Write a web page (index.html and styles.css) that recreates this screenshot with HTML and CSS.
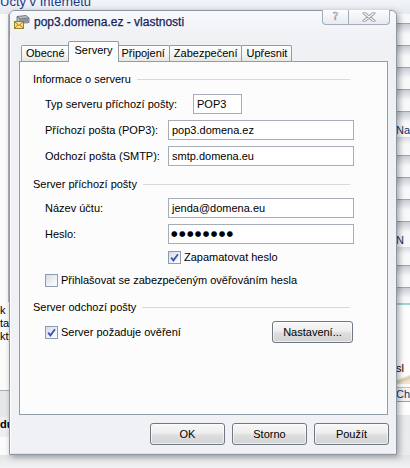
FILE: index.html
```html
<!DOCTYPE html>
<html lang="cs">
<head>
<meta charset="utf-8">
<title>pop3.domena.ez - vlastnosti</title>
<link rel="stylesheet" href="styles.css">
</head>
<body>
<div class="desk">
  <div class="bg-top"><span class="bg-title">Účty v Internetu</span></div>
  <div class="bg-left">
    <div class="bl-upper"></div>
    <div class="bl-text"><div>k</div><div>ta</div><div>kty</div></div>
    <div class="bl-band"></div>
    <div class="bl-du">du</div>
  </div>
  <div class="bg-right">
    <div class="br-list">
      <div class="br-nas">Nas</div>
      <div class="br-n">N</div>
    </div>
    <div class="br-pane">
      <div class="br-sl">sl</div>
      <div class="br-pic"></div>
      <div class="br-ch">Ch</div>
    </div>
  </div>
  <div class="bg-bottom"></div>

  <div class="dialog">
    <div class="titlebar">
      <svg class="appicon" viewBox="0 0 16 16" width="16" height="16">
        <path d="M3 2.5 L12 1.5 L15 4 L15 8.5 L6 9.5 L3 7 Z" fill="#b9bec6" stroke="#5d636b" stroke-width="0.8"/>
        <path d="M3 2.5 L6 5 L15 4" fill="none" stroke="#5d636b" stroke-width="0.8"/>
        <path d="M6 5 L6 9.5" fill="none" stroke="#5d636b" stroke-width="0.8"/>
        <path d="M6.5 5.5 L14.5 4.5 L14.5 8 L6.5 9 Z" fill="#8c939c"/>
        <rect x="0.5" y="7.5" width="9" height="7" fill="#f5e27a" stroke="#8b7a1c" stroke-width="0.9"/>
        <path d="M0.8 7.8 L5 11.5 L9.2 7.8 M0.8 14.2 L3.8 10.8 M9.2 14.2 L6.2 10.8" fill="none" stroke="#b5542a" stroke-width="0.8"/>
      </svg>
      <span class="title">pop3.domena.ez - vlastnosti</span>
      <div class="capbtns">
        <div class="capbtn help"><span class="q">?</span></div>
        <div class="capbtn close">
          <svg viewBox="0 0 14 10" width="14" height="10">
            <path d="M2 1 L12 9 M12 1 L2 9" stroke="#959ca6" stroke-width="3" stroke-linecap="round"/>
            <path d="M2 1 L12 9 M12 1 L2 9" stroke="#f4f5f7" stroke-width="1.3" stroke-linecap="round"/>
          </svg>
        </div>
      </div>
    </div>

    <div class="tabs">
      <div class="tab">Obecné</div>
      <div class="tab active">Servery</div>
      <div class="tab">Připojení</div>
      <div class="tab">Zabezpečení</div>
      <div class="tab">Upřesnit</div>
    </div>

    <div class="panel">
      <div class="group-h"><span>Informace o serveru</span></div>
      <div class="row first">
        <span class="lbl wide">Typ serveru příchozí pošty:</span>
        <div class="field short">POP3</div>
      </div>
      <div class="row">
        <span class="lbl">Příchozí pošta (POP3):</span>
        <div class="field">pop3.domena.ez</div>
      </div>
      <div class="row">
        <span class="lbl">Odchozí pošta (SMTP):</span>
        <div class="field">smtp.domena.eu</div>
      </div>

      <div class="group-h g2"><span>Server příchozí pošty</span></div>
      <div class="row first2">
        <span class="lbl">Název účtu:</span>
        <div class="field">jenda@domena.eu</div>
      </div>
      <div class="row">
        <span class="lbl">Heslo:</span>
        <div class="field pw">●●●●●●●●</div>
      </div>
      <div class="check-row indent">
        <span class="cb">
          <svg viewBox="0 0 11 11" width="11" height="11"><path d="M2.2 5.6 L4.4 8.4 L9 2.2" fill="none" stroke="#3a55b8" stroke-width="1.8"/></svg>
        </span>
        <span>Zapamatovat heslo</span>
      </div>
      <div class="check-row second">
        <span class="cb"></span>
        <span>Přihlašovat se zabezpečeným ověřováním hesla</span>
      </div>

      <div class="group-h g3"><span>Server odchozí pošty</span></div>
      <div class="check-row last">
        <span class="cb">
          <svg viewBox="0 0 11 11" width="11" height="11"><path d="M2.2 5.6 L4.4 8.4 L9 2.2" fill="none" stroke="#3a55b8" stroke-width="1.8"/></svg>
        </span>
        <span>Server požaduje ověření</span>
        <button class="btn setup">Nastavení...</button>
      </div>
    </div>

    <div class="buttons">
      <button class="btn">OK</button>
      <button class="btn">Storno</button>
      <button class="btn">Použít</button>
    </div>
  </div>
</div>
</body>
</html>
```

FILE: styles.css
```css
html, body {
  margin: 0;
  padding: 0;
}

body {
  width: 410px;
  height: 468px;
  overflow: hidden;
  font-family: "Liberation Sans", Arial, sans-serif;
  font-size: 11px;
  color: #000;
  background: #eceef1;
}

.desk {
  position: relative;
  width: 410px;
  height: 468px;
  overflow: hidden;
}

/* ---------- background windows (desktop canvas) ---------- */
.bg-top {
  position: absolute;
  left: 0;
  top: 0;
  width: 410px;
  height: 14px;
  background: linear-gradient(#f1f4f8, #e6eaf0);
  overflow: hidden;
}

.bg-title {
  display: block;
  margin-top: -6px;
  font-size: 13px;
  line-height: 15px;
  color: #1b3987;
}

.bg-left {
  position: absolute;
  left: 0;
  top: 14px;
  width: 9px;
  height: 441px;
  display: flex;
  flex-direction: column;
  background: #fbfbfc;
  overflow: hidden;
}

.bl-upper {
  height: 288px;
  border-right: 1px solid #b5b9be;
  box-sizing: border-box;
}

.bl-text {
  height: 86px;
  padding-top: 2px;
  line-height: 13px;
  font-size: 11px;
  white-space: nowrap;
}

.bl-band {
  height: 26px;
  border-top: 1px solid #a9adb2;
  background: #e6e7e9;
}

.bl-du {
  height: 20px;
  font-weight: bold;
  line-height: 14px;
  background: #eeeff1;
}

.bg-right {
  position: absolute;
  left: 396px;
  top: 14px;
  width: 14px;
  height: 441px;
  display: flex;
  flex-direction: column;
  background: linear-gradient(#d6d8dc, #ebecee);
  overflow: hidden;
}

.br-list {
  height: 289px;
  background: repeating-linear-gradient(to bottom,
    #f7f8f9 0, #f7f8f9 9px,
    #9ea4ab 9px, #9ea4ab 10px,
    #c9cdd3 10px, #e9ebee 17px,
    #f7f8f9 20px, #f7f8f9 22px);
  font-size: 11px;
  white-space: nowrap;
  color: #1c2f63;
}

.br-nas {
  margin-top: 109px;
  line-height: 14px;
  background: #f7f8f9;
}

.br-n {
  margin-top: 96px;
  line-height: 14px;
  background: #f7f8f9;
}

.br-pane {
  height: 110px;
  border-top: 2px solid #9fd3d3;
  background: #fdfdfd;
  font-size: 11px;
  white-space: nowrap;
}

.br-sl {
  margin-top: 56px;
  line-height: 14px;
}

.br-pic {
  height: 9px;
  background: linear-gradient(160deg, #fdfdfd 30%, #d8c8a6 50%, #efe6d2 80%);
}

.br-ch {
  margin-top: 3px;
  line-height: 13px;
  border-top: 1px solid #bfc3c8;
  border-bottom: 1px solid #9aa0a6;
  background: #f1f2f4;
  color: #1c2f63;
}

.bg-bottom {
  position: absolute;
  left: 0;
  top: 455px;
  width: 410px;
  height: 13px;
  background: linear-gradient(#e2e3e5, #f1f2f3);
}

/* ---------- dialog (window on the desktop) ---------- */
.dialog {
  position: absolute;
  left: 9px;
  top: 10px;
  width: 388px;
  height: 445px;
  box-sizing: border-box;
  border: 1px solid #8d96a3;
  border-radius: 6px 6px 0 0;
  background: #eff1f5;
  box-shadow: 2px 2px 6px rgba(0, 0, 0, 0.35), inset 1px 0 0 #ffffff, inset 0 -1px 0 #d5e9ea;
  display: flex;
  flex-direction: column;
}

.titlebar {
  height: 25px;
  flex: none;
  display: flex;
  align-items: flex-start;
  border-radius: 5px 5px 0 0;
  background: linear-gradient(#f8f9fc, #eff1f5);
}

.appicon {
  flex: none;
  margin: 3px 0 0 4px;
}

.title {
  margin: 3px 0 0 4px;
  font-size: 12px;
  line-height: 16px;
  color: #14245a;
  -webkit-text-stroke: 0.25px #14245a;
  white-space: nowrap;
}

.capbtns {
  margin: -1px 6px 0 auto;
  display: flex;
}

.capbtn {
  height: 15px;
  box-sizing: border-box;
  border: 1px solid #a5adb8;
  border-top: none;
  background: linear-gradient(#fdfdfe, #e7eaef);
  display: flex;
  align-items: center;
  justify-content: center;
}

.capbtn.help {
  width: 27px;
  border-radius: 0 0 0 4px;
}

.capbtn.close {
  width: 41px;
  border-left: none;
  border-radius: 0 0 4px 0;
}

.q {
  font-family: "DejaVu Sans", sans-serif;
  font-size: 11px;
  line-height: 12px;
  color: #f6f7f9;
  -webkit-text-stroke: 0.6px #959ca6;
}

/* ---------- tabs ---------- */
.tabs {
  height: 20px;
  flex: none;
  margin: 5px 0 0 11px;
  display: flex;
  align-items: flex-end;
  position: relative;
  z-index: 2;
}

.tab {
  height: 16px;
  box-sizing: border-box;
  padding: 0 4px;
  margin-left: -1px;
  border: 1px solid #929ca5;
  border-bottom: none;
  border-radius: 2px 2px 0 0;
  background: linear-gradient(#fefefe, #f5f5f4 55%, #e6e6e2);
  line-height: 15px;
  white-space: nowrap;
}

.tab:first-child {
  margin-left: 0;
}

.tab.active {
  height: 21px;
  margin: 0 -2px -1px -2px;
  padding: 1px 6px 0;
  background: #fcfcfd;
  line-height: 14px;
  position: relative;
  z-index: 3;
}

/* ---------- panel ---------- */
.panel {
  height: 354px;
  flex: none;
  box-sizing: border-box;
  margin: 0 8px 0 9px;
  padding: 10px 33px 0 13px;
  border: 1px solid #929ca5;
  background: #fcfcfd;
}

.group-h {
  height: 14px;
  margin-right: 4px;
  display: flex;
  align-items: center;
  line-height: 14px;
  white-space: nowrap;
}

.group-h::after {
  content: "";
  flex: 1;
  height: 1px;
  margin-left: 6px;
  background: #d6d9e0;
}

.group-h.g2 {
  margin-top: 11px;
}

.group-h.g3 {
  margin-top: 13px;
}

.row {
  height: 20px;
  margin-top: 6px;
  padding-left: 12px;
  display: flex;
  align-items: center;
}

.row.first {
  margin-top: 8px;
}

.row.first2 {
  margin-top: 7px;
}

.lbl {
  width: 123px;
  flex: none;
  white-space: nowrap;
}

.lbl.wide {
  width: 148px;
}

.field {
  flex: 1;
  height: 20px;
  box-sizing: border-box;
  padding: 0 3px;
  border: 1px solid #a7adb6;
  background: #ffffff;
  line-height: 18px;
  white-space: nowrap;
}

.field.short {
  flex: none;
  width: 49px;
}

.field.pw {
  font-family: "DejaVu Sans", sans-serif;
  font-size: 7.5px;
  letter-spacing: 1.4px;
  padding-left: 2px;
}

.check-row {
  height: 14px;
  margin-top: 6px;
  padding-left: 12px;
  display: flex;
  align-items: center;
  white-space: nowrap;
}

.check-row.indent {
  padding-left: 135px;
}

.check-row.second {
  margin-top: 9px;
}

.check-row.last {
  height: 22px;
  margin-top: 7px;
}

.cb {
  width: 13px;
  height: 13px;
  flex: none;
  box-sizing: border-box;
  margin-right: 3px;
  border: 1px solid #8e9cb2;
  background: linear-gradient(135deg, #d5dae4, #f0f2f6 60%, #fbfcfd);
  display: flex;
  align-items: center;
  justify-content: center;
}

.btn {
  width: 75px;
  height: 22px;
  box-sizing: border-box;
  padding: 0;
  border: 1px solid #6f7883;
  border-radius: 3px;
  background: linear-gradient(#f8f8f8 0%, #eeeeee 45%, #dedede 55%, #d3d3d3 100%);
  box-shadow: inset 0 0 0 1px rgba(255, 255, 255, 0.6);
  font-family: "Liberation Sans", Arial, sans-serif;
  font-size: 11px;
  color: #000;
}

.btn.setup {
  width: 81px;
  margin: 0 1px 0 auto;
}

.buttons {
  flex: none;
  margin: 8px 7px 0 0;
  display: flex;
  justify-content: flex-end;
  gap: 7px;
}
```
